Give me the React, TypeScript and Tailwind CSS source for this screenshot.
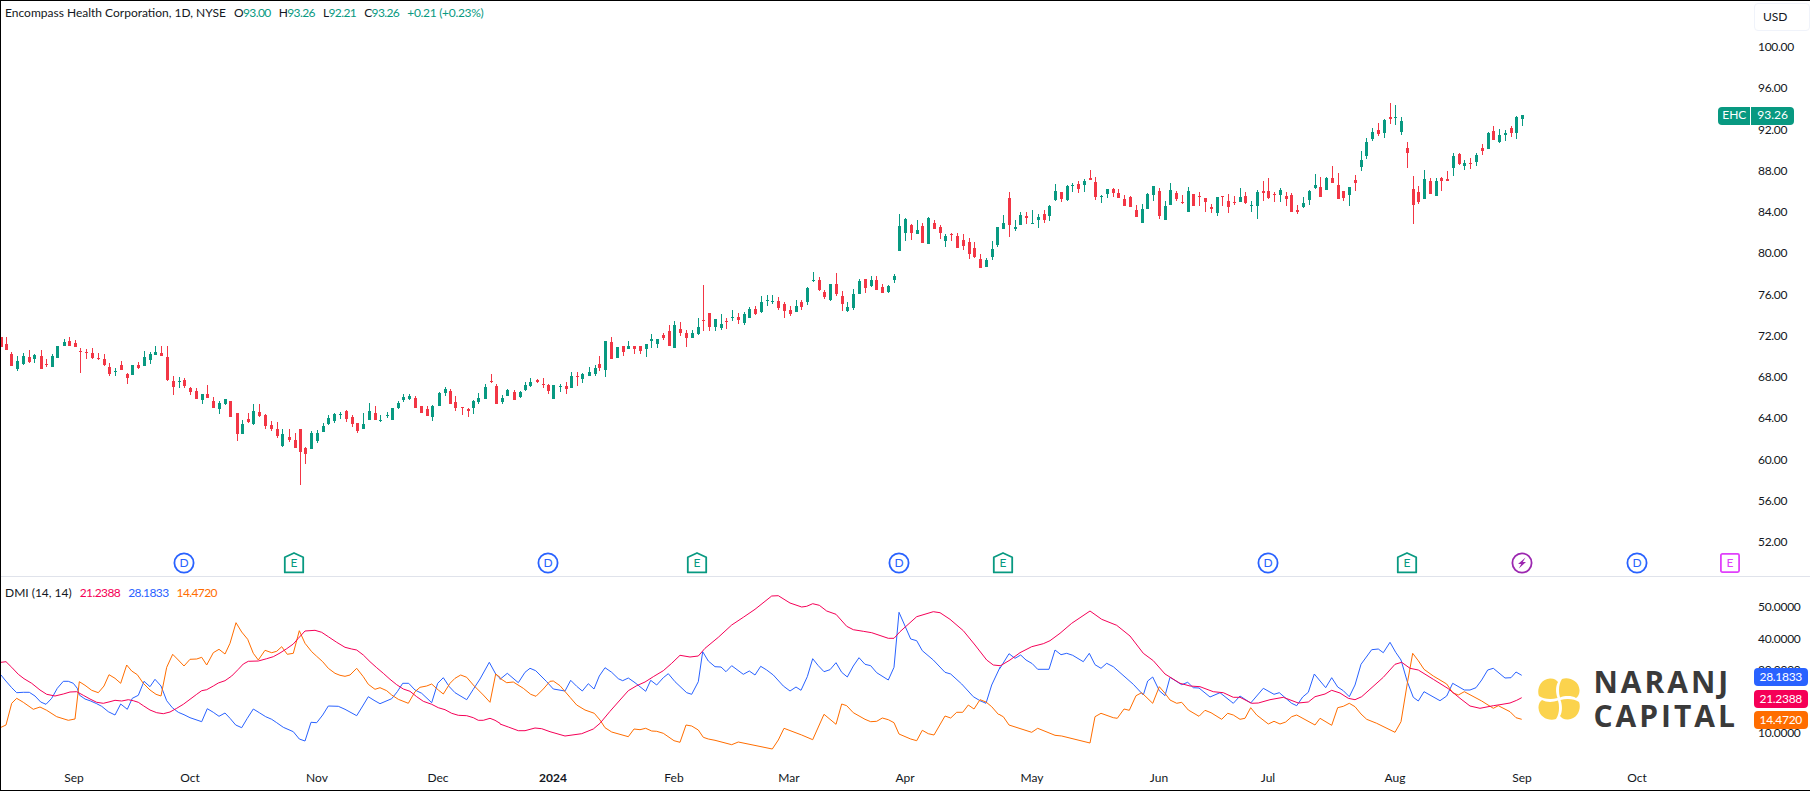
import React from "react";

type C = { x: number; wt: number; bt: number; bb: number; wb: number; up: boolean };

const parseCandles = (s: string, fx: (n: number) => number, fy: (n: number) => number): C[] =>
  s.trim().split(/\s+/).map((t) => {
    const p = t.split(",");
    return {
      x: Math.round(fx(+p[0])),
      wt: fy(+p[1]),
      bt: fy(+p[2]),
      bb: fy(+p[3]),
      wb: fy(+p[4]),
      up: p[5] === "g",
    };
  });

const part1 = `2,110,110,140,140,r 16,111,132,150,150,r 30,156,162,198,198,r 45,168,183,207,213,g 61,159,168,192,195,g 76,150,171,186,189,r 90,162,165,177,189,g 106,150,168,207,207,r 121,177,192,195,201,r 137,162,168,201,201,g 150,138,138,174,174,g 166,117,126,138,138,g 181,111,123,138,138,r 197,120,129,141,141,r 210,144,153,156,219,r 226,147,156,159,177,r 241,144,159,174,177,r 257,159,174,177,180,r 272,162,177,195,198,r 285,189,201,222,228,r 301,204,213,216,228,g 317,183,195,210,210,r 333,219,222,234,252,r 346,195,195,225,225,g 361,186,195,204,207,r 377,153,171,198,198,g 392,156,162,180,192,g 406,138,156,165,165,g 421,138,159,168,168,r 437,138,171,240,243,r 452,228,243,261,285,r 468,231,243,246,264,g 481,234,240,258,264,r 497,261,264,276,285,r 513,264,273,297,297,r 529,282,282,300,312,g 541,255,282,294,294,r 557,291,303,324,324,r 573,303,309,327,342,g 589,297,297,312,315,g 601,303,303,351,351,r 618,339,339,402,423,r 633,360,372,402,402,g 648,339,357,366,369,r 662,312,333,372,375,g 677,312,336,348,351,r 693,342,345,378,387,r 709,363,375,387,393,r 725,366,387,408,414,r 738,387,402,438,441,g 754,387,411,420,426,r 770,399,420,444,444,r 785,387,387,456,555,r 798,441,444,462,492,r 813,393,399,447,447,g 829,390,399,423,429,g 844,369,378,396,396,g 858,345,354,372,375,g 873,339,342,363,369,g 889,336,342,345,357,g 905,330,333,357,366,r 921,345,351,372,381,r 934,369,369,393,399,r 949,339,372,387,387,g 965,309,333,360,360,g 981,318,339,360,360,r 994,345,360,363,366,g 1010,336,345,348,354,g 1025,324,324,360,360,g 1041,303,309,324,327,g 1054,282,291,300,306,g 1069,282,288,297,300,g 1085,288,294,324,324,r 1101,318,318,339,339,r 1115,318,327,348,348,r 1130,315,318,351,363,g 1146,276,279,318,318,g 1162,261,267,279,288,g 1177,267,273,312,312,r 1190,288,306,324,333,r 1206,321,321,324,345,r 1222,324,327,333,351,r 1237,300,303,324,342,g 1250,279,294,306,312,g 1266,252,261,297,297,g 1282,222,243,246,249,r 1297,252,258,312,312,r 1311,285,294,306,312,g 1326,267,270,288,288,g 1342,270,276,300,300,r 1358,273,276,291,294,g 1373,246,255,270,273,g 1386,234,246,258,261,g 1402,237,241,245,249,r 1418,234,252,255,264,r 1433,252,255,273,282,r 1446,255,255,297,297,g 1462,252,258,261,276,g 1478,246,258,267,282,r 1493,216,228,264,264,g 1507,216,228,231,258,r 1522,219,222,237,249,g 1538,201,216,228,228,g 1554,195,204,222,228,g 1566,168,192,204,213,r`;

const part2 = `16,513,513,600,621,g 34,501,516,567,567,r 52,531,531,564,564,g 70,528,528,546,558,r 85,513,528,537,537,g 103,528,528,537,552,r 121,528,528,543,552,r 139,522,522,537,561,g 154,492,507,513,534,g 172,507,507,522,534,g 190,489,495,504,510,r 208,465,483,528,528,r 223,453,465,534,534,g 241,456,477,489,498,r 259,480,489,504,531,r 277,480,489,504,504,g 295,444,471,492,495,g 310,345,450,453,483,r 328,429,429,471,483,r 346,447,447,471,483,g 364,432,462,474,480,g 379,444,453,456,477,r 397,420,441,444,453,g 415,429,441,450,462,r 433,426,432,459,465,g 448,411,417,444,444,g 466,408,417,432,435,r 484,378,396,426,429,g 502,375,390,393,408,g 517,375,393,396,402,g 535,381,393,414,420,r 553,396,402,423,444,r 571,408,420,432,438,r 589,390,408,426,426,g 604,390,396,411,420,r 622,351,354,396,405,g 640,306,330,333,336,g 658,321,330,360,363,r 673,360,366,381,387,r 691,342,342,390,393,g 709,309,342,372,378,r 727,363,378,402,423,r 742,396,411,423,426,g 760,357,372,414,420,g 778,327,333,372,372,g 796,327,327,354,369,r 814,318,330,348,351,g 829,318,330,360,360,r 847,342,351,369,369,r 865,345,348,366,369,g 883,312,318,330,339,g 898,132,168,243,243,g 916,144,147,189,213,g 934,162,165,189,210,r 952,150,180,192,192,g 967,159,168,219,219,r 985,141,144,222,222,g 1003,150,159,177,177,r 1021,165,171,189,207,r 1036,192,198,213,231,g 1054,189,192,195,213,r 1072,189,198,234,234,r 1090,192,210,228,240,r 1108,204,216,252,267,r 1123,216,234,261,264,r 1141,252,267,294,294,r 1159,264,270,291,291,g 1177,213,237,261,270,g 1192,171,171,225,231,g 1210,135,159,177,177,g 1228,66,84,165,201,r 1246,150,171,177,183,g 1261,126,135,165,165,g 1279,126,138,144,162,r 1297,120,159,162,162,g 1315,132,141,150,174,g 1333,120,132,150,159,r 1348,105,108,138,153,g 1366,42,63,90,93,g 1384,66,66,87,96,r 1402,45,48,90,93,g 1417,39,45,48,66,g 1435,33,42,57,69,r 1453,27,33,45,66,g 1471,0,24,30,30,r 1486,21,36,81,90,r`;

const part3 = `4,315,318,321,339,g 22,297,297,312,324,g 40,294,297,309,321,r 55,297,309,324,324,r 73,315,327,348,348,r 91,318,321,351,351,r 109,345,360,381,381,r 127,342,357,399,399,g 142,309,312,357,357,g 160,288,288,315,333,g 178,294,303,378,387,r 196,333,348,390,390,g 211,279,300,345,345,g 229,303,309,327,333,r 247,315,336,339,342,r 265,291,303,366,366,g 280,312,312,348,348,r 298,306,318,321,348,r 316,324,324,336,366,r 334,342,351,357,369,r 352,321,321,369,378,g 367,318,318,321,348,r 385,312,333,351,369,r 403,318,336,339,345,r 421,294,321,336,336,g 436,306,318,339,342,r 454,333,345,348,366,g 472,300,306,348,387,g 490,273,303,309,333,r 505,264,303,324,327,r 523,306,312,315,336,r 541,294,300,315,336,g 559,306,318,327,348,r 574,309,315,366,366,r 592,345,360,366,372,r 610,321,339,351,354,g 628,300,303,330,345,g 646,252,285,294,297,g 661,261,291,321,321,r 679,261,264,300,300,g 697,228,264,279,279,r 715,249,285,327,327,r 730,303,303,324,333,r 748,291,291,315,348,g 766,255,270,279,303,r 784,183,210,231,243,g 799,144,156,198,207,g 817,114,126,147,153,g 835,99,120,132,138,r 853,87,90,129,144,g 871,39,81,87,102,r 886,45,81,84,105,g 904,81,93,126,135,g 922,156,174,189,234,r 940,258,297,345,402,r 955,288,306,336,342,r 973,240,267,327,327,g 991,264,273,312,312,r 1009,264,273,318,318,g 1024,261,264,273,303,r 1042,243,267,273,273,r 1060,189,198,234,258,g 1078,189,192,222,225,r 1093,210,219,228,240,g 1111,204,219,222,237,r 1129,189,195,216,228,g 1147,162,174,183,195,r 1165,126,129,177,177,g 1180,108,123,150,150,r 1198,117,135,156,159,g 1216,120,129,135,153,g 1234,108,114,129,141,r 1249,78,81,129,147,g 1267,75,75,87,108,g`;

const candles: C[] = [
  ...parseCandles(part1, (x) => x / 2.613, (y) => 300 + y / 3),
  ...parseCandles(part2, (x) => 600 + x / 3, (y) => 170 + y / 3),
  ...parseCandles(part3, (x) => 1100 + x / 3, (y) => 90 + y / 3),
];

const seg = (ox: number, oy: number, s: string) =>
  s.trim().split(/\s+/).map((t) => {
    const [x, y] = t.split(",").map(Number);
    return `${(ox + x / 3).toFixed(1)},${(oy + y / 3).toFixed(1)}`;
  }).join(" ");

const pink = [
  seg(0, 540, `3,367 18,365 35,382 55,403 72,416 95,430 120,450 140,463 165,468 190,462 210,456 230,455 250,466 270,477 290,487 310,490 330,485 345,481 365,483 385,479 400,482 415,487 430,497 450,510 470,518 490,521 510,516 530,505 550,493 570,478 590,463 605,452 620,449 640,438 655,429 675,422 695,408 715,388 730,372 745,364 775,363 800,356 820,350 840,339 860,326 880,312 895,295 915,273 945,271 965,277 985,290 1010,307 1035,322 1055,327 1070,330 1090,345 1110,365 1130,383 1150,400 1170,418 1190,434 1210,447 1230,454 1250,470 1270,484 1295,493 1315,503 1335,509 1355,520 1375,526 1400,527 1420,533 1435,541 1450,541 1470,535 1485,541 1500,550`),
  seg(500, 580, `0,432 25,441 55,452 75,452 105,444 125,446 150,455 195,468 245,461 280,447 300,430 330,394 360,360 385,332 410,317 435,306 460,290 490,272 515,250 540,226 570,231 595,228 615,205 655,172 695,135 730,112 765,88 815,48 835,47 870,69 905,81 920,79 938,71 958,76 980,93 1008,103 1040,139 1060,149 1090,154 1115,158 1165,175 1182,175 1200,155 1250,110 1300,95 1320,98 1350,118 1390,152 1425,195 1460,240 1480,255 1500,257`),
  seg(1000, 540, `0,378 30,360 60,338 95,320 130,311 150,302 180,280 215,250 270,213 305,238 350,256 390,288 430,340 460,362 495,402 540,430 570,438 600,440 640,455 670,458 700,472 720,472 755,490 775,489 810,479 850,472 895,489 925,486 945,470 975,462 995,451 1020,459 1045,475 1065,479 1085,470 1150,412 1185,373 1205,367 1230,385 1255,390 1300,418 1345,446 1380,475 1410,498 1440,505 1480,497 1500,494 1530,489 1550,481 1565,473`),
].join(" ");

const blue = [
  seg(0, 540, `3,405 15,420 35,443 50,458 70,457 88,457 105,468 122,486 138,493 155,475 172,445 190,424 205,424 220,430 232,445 238,465 255,477 272,483 290,491 305,499 325,515 345,525 362,492 382,508 397,475 415,466 432,424 450,440 465,418 483,438 500,482 517,503 535,517 552,524 570,533 605,545 622,506 640,517 657,529 675,519 690,535 707,555 725,563 742,535 760,507 778,518 797,530 815,538 830,548 850,562 880,575 898,597 915,603 933,547 950,548 968,525 985,498 1015,499 1035,508 1070,527 1088,498 1105,470 1122,481 1140,491 1175,476 1192,455 1208,430 1226,430 1245,450 1265,460 1295,488 1313,430 1330,413 1348,440 1365,458 1400,479 1420,448 1440,417 1468,367 1487,402 1500,415`),
  seg(500, 580, `0,298 22,280 55,308 75,277 90,265 107,272 140,305 160,327 195,333 212,301 230,319 247,333 265,311 282,327 298,288 315,263 335,277 355,296 368,302 385,294 405,308 437,334 452,301 470,315 490,293 505,281 525,305 560,338 575,343 595,305 608,215 625,243 645,260 663,261 678,275 695,257 730,283 748,273 765,285 782,259 800,270 820,285 850,318 870,333 888,321 903,331 922,290 938,236 955,257 972,275 990,269 1008,248 1025,277 1042,291 1060,258 1077,233 1095,253 1112,257 1130,278 1165,300 1182,262 1197,97 1232,177 1250,182 1267,212 1300,240 1335,277 1352,282 1385,312 1420,350 1440,362 1458,370 1475,315 1500,262`),
  seg(1000, 540, `0,385 27,341 45,355 62,345 78,360 97,371 113,388 147,388 165,330 183,344 200,340 218,346 250,365 268,340 285,374 303,385 320,370 340,380 400,433 430,465 443,423 458,411 478,452 495,467 510,412 545,434 563,427 580,443 597,444 630,471 660,458 700,490 720,468 752,489 790,445 822,463 838,458 875,490 890,497 908,471 925,457 943,402 977,443 995,413 1013,441 1030,452 1048,470 1065,435 1083,373 1115,329 1135,327 1150,338 1170,307 1187,337 1203,360 1222,425 1240,472 1255,483 1272,455 1320,482 1340,468 1358,430 1393,450 1410,450 1428,443 1445,420 1463,390 1480,385 1515,414 1533,413 1548,396 1565,406`),
].join(" ");

const orange = [
  seg(0, 540, `3,562 18,555 35,490 50,475 70,487 100,508 120,501 140,511 170,530 205,541 225,537 238,425 255,436 275,451 295,458 312,438 327,404 345,415 362,430 380,375 395,393 412,404 430,430 450,450 468,463 483,468 500,382 518,343 535,360 552,378 570,358 590,357 605,352 620,375 640,338 657,328 675,342 690,310 708,248 725,276 743,298 760,340 775,360 795,331 815,338 830,334 845,320 862,343 880,340 898,272 915,310 935,335 950,349 968,365 985,385 1005,400 1020,406 1035,409 1050,405 1070,385 1090,410 1105,433 1125,448 1140,443 1160,452 1175,465 1195,478 1225,490 1245,455 1260,442 1280,438 1295,432 1315,450 1330,462 1350,430 1365,415 1382,405 1400,412 1420,435 1450,465 1470,487 1487,402 1500,412`),
  seg(500, 580, `0,295 20,308 40,306 70,325 92,343 108,349 130,327 150,304 160,303 180,317 210,352 230,375 255,390 283,400 300,420 315,443 335,456 385,470 402,447 420,449 437,445 455,453 470,454 490,460 522,482 540,487 558,435 575,438 595,450 610,472 625,477 645,481 695,494 715,486 817,507 835,480 852,445 905,465 938,479 972,403 1008,433 1025,372 1040,377 1060,398 1095,418 1112,425 1130,424 1147,414 1165,419 1182,428 1197,462 1232,477 1250,482 1267,451 1285,461 1302,465 1335,408 1352,414 1370,397 1388,397 1405,375 1422,387 1440,359 1458,366 1475,380 1495,403 1500,404`),
  seg(1000, 540, `0,525 10,530 27,555 95,577 113,565 165,586 185,588 270,609 285,530 303,520 340,533 352,535 372,507 388,511 408,467 425,458 458,490 478,440 495,460 510,480 530,490 545,487 565,510 597,529 615,511 633,518 665,538 683,520 700,525 720,538 735,535 752,503 770,525 805,552 822,544 840,552 857,546 875,530 890,525 945,555 960,535 995,556 1013,503 1030,499 1048,490 1065,500 1083,522 1100,538 1130,550 1185,577 1203,545 1222,430 1238,340 1255,362 1272,388 1300,408 1320,420 1340,432 1358,458 1375,465 1393,455 1445,483 1480,505 1495,497 1530,515 1548,533 1565,538`),
].join(" ");

const priceLabels = ["100.00", "96.00", "92.00", "88.00", "84.00", "80.00", "76.00", "72.00", "68.00", "64.00", "60.00", "56.00", "52.00"];
const dmiLabels = ["50.0000", "40.0000", "30.0000", "20.0000", "10.0000"];
const dmiTags = [
  { t: "28.1833", top: 91, c: "bg-[#2962ff]" },
  { t: "21.2388", top: 113, c: "bg-[#f50057]" },
  { t: "14.4720", top: 134, c: "bg-[#ff6d00]" },
];
const months = [
  { t: "Sep", x: 74 }, { t: "Oct", x: 190 }, { t: "Nov", x: 317 }, { t: "Dec", x: 438 },
  { t: "2024", x: 553, b: true }, { t: "Feb", x: 674 }, { t: "Mar", x: 789 }, { t: "Apr", x: 905 },
  { t: "May", x: 1032 }, { t: "Jun", x: 1159 }, { t: "Jul", x: 1268 }, { t: "Aug", x: 1395 },
  { t: "Sep", x: 1522 }, { t: "Oct", x: 1637 },
];
const events = [
  { k: "D", x: 184 }, { k: "E", x: 294 }, { k: "D", x: 548 }, { k: "E", x: 697 },
  { k: "D", x: 899 }, { k: "E", x: 1003 }, { k: "D", x: 1268 }, { k: "E", x: 1407 },
  { k: "L", x: 1522 }, { k: "D", x: 1637 }, { k: "P", x: 1730 },
];

function EventMark({ k, x }: { k: string; x: number }) {
  const text = k === "D" ? "text-[#2962ff]" : k === "E" ? "text-[#089981]" : "text-[#e040fb]";
  return (
    <div
      className={`absolute top-137.5 flex size-6 -translate-x-1/2 items-center justify-center text-xs ${text}`}
      style={{ left: x - 1 }}
    >
      <svg viewBox="0 0 24 24" className="absolute inset-0 size-6" fill="none" strokeWidth="1.8" strokeLinejoin="round">
        {k === "D" && <circle cx="12" cy="12" r="9.6" stroke="#2962ff" />}
        {k === "E" && <path d="M2.8 6.2 12 2 21.2 6.2 V21.4 H2.8 Z" stroke="#089981" />}
        {k === "L" && (
          <>
            <circle cx="12" cy="12" r="9.6" stroke="#9c27b0" />
            <path d="M15.5 6.5 8 13 11.2 13 8.8 17.5 16 11 12.8 11 Z" fill="#9c27b0" />
          </>
        )}
        {k === "P" && <rect x="2.9" y="2.9" width="18.2" height="18.2" rx="1.5" stroke="#e040fb" />}
      </svg>
      {k === "L" ? null : <span className="relative">{k === "P" ? "E" : k}</span>}
    </div>
  );
}

function Petal({ r }: { r: number }) {
  return (
    <path
      transform={`rotate(${r})`}
      d="M1 -1.5 C-1 -8 0 -16 3 -20 C9 -22.5 20 -19 20.5 -9 C20.7 -5 19 -2.5 17 -1 C13 -3.5 6 -3.5 1 -1.5 Z"
      fill="#fbd34d"
    />
  );
}

export default function App() {
  return (
    <div className="flex h-screen w-full flex-col border-y border-l border-black bg-white font-['Lato','Open_Sans',sans-serif] text-xs text-[#131722]">
      <div className="relative flex h-144 border-b border-[#e0e3eb]">
        <div className="relative flex-1">
          <svg viewBox="1 1 1753 575" className="block h-full w-full" shapeRendering="crispEdges">
            {candles.map((c, i) => (
              <g key={i} fill={c.up ? "#089981" : "#f23645"}>
                <rect x={c.x} y={c.wt} width="1" height={Math.max(c.wb - c.wt, 1)} />
                <rect x={c.x - 1} y={c.bt} width="3" height={Math.max(c.bb - c.bt, 1)} />
              </g>
            ))}
          </svg>
          <div className="absolute left-1 top-1 flex gap-2 whitespace-nowrap">
            <span>Encompass Health Corporation, 1D, NYSE</span>
            <span className="tracking-tighter">O<span className="text-[#089981]">93.00</span></span>
            <span className="tracking-tighter">H<span className="text-[#089981]">93.26</span></span>
            <span className="tracking-tighter">L<span className="text-[#089981]">92.21</span></span>
            <span className="tracking-tighter">C<span className="text-[#089981]">93.26</span></span>
            <span className="tracking-tight text-[#089981]">+0.21 (+0.23%)</span>
          </div>
        </div>
        <div className="relative flex w-14 flex-col justify-between pb-6.5 pl-1 pt-9.5 tracking-tight">
          {priceLabels.map((p) => (
            <span key={p}>{p}</span>
          ))}
        </div>
        <div className="absolute right-0 top-0.5 flex h-7 w-14 items-center rounded border border-[#f0f3fa] bg-white pl-2">USD</div>
        <div className="absolute right-4 top-26.5 flex h-4.5 overflow-hidden rounded-sm text-white">
          <span className="mr-px bg-[#089981] px-1">EHC</span>
          <span className="bg-[#089981] px-1.5">93.26</span>
        </div>
        {events.map((e, i) => (
          <EventMark key={i} {...e} />
        ))}
      </div>

      <div className="relative flex h-47 ">
        <div className="relative flex-1">
          <svg viewBox="1 577 1753 188" className="block h-full w-full" fill="none" strokeWidth="1">
            <polyline points={blue} stroke="#2962ff" />
            <polyline points={orange} stroke="#ff6d00" />
            <polyline points={pink} stroke="#f50057" />
          </svg>
          <div className="absolute left-1 top-2 flex gap-2 whitespace-nowrap">
            <span>DMI (14, 14)</span>
            <span className="tracking-tighter text-[#f50057]">21.2388</span>
            <span className="tracking-tighter text-[#2962ff]">28.1833</span>
            <span className="tracking-tighter text-[#ff6d00]">14.4720</span>
          </div>
          <div className="absolute right-4 top-22 flex items-center gap-3">
            <svg viewBox="-22 -22 44 44" className="size-11">
              <Petal r={0} />
              <Petal r={90} />
              <Petal r={180} />
              <Petal r={270} />
            </svg>
            <div className="font-['Open_Sans',sans-serif] text-3xl font-bold leading-[34px] tracking-widest text-[#3a3a3a]">
              <div>NARANJ</div>
              <div>CAPITAL</div>
            </div>
          </div>
        </div>
        <div className="relative flex w-14 flex-col justify-between pb-6 pl-1 pt-5.5 tracking-tight">
          {dmiLabels.map((p) => (
            <span key={p}>{p}</span>
          ))}
        </div>
        {dmiTags.map((t) => (
          <div
            key={t.t}
            className={`absolute right-0.5 flex h-4.5 items-center rounded-sm px-1.5 tracking-tight text-white ${t.c}`}
            style={{ top: t.top }}
          >
            {t.t}
          </div>
        ))}
      </div>

      <div className="relative flex-1">
        {months.map((m) => (
          <span
            key={m.t + m.x}
            className={`absolute inset-y-0 flex -translate-x-1/2 items-center ${m.b ? "font-bold" : ""}`}
            style={{ left: m.x - 1 }}
          >
            {m.t}
          </span>
        ))}
      </div>
    </div>
  );
}
